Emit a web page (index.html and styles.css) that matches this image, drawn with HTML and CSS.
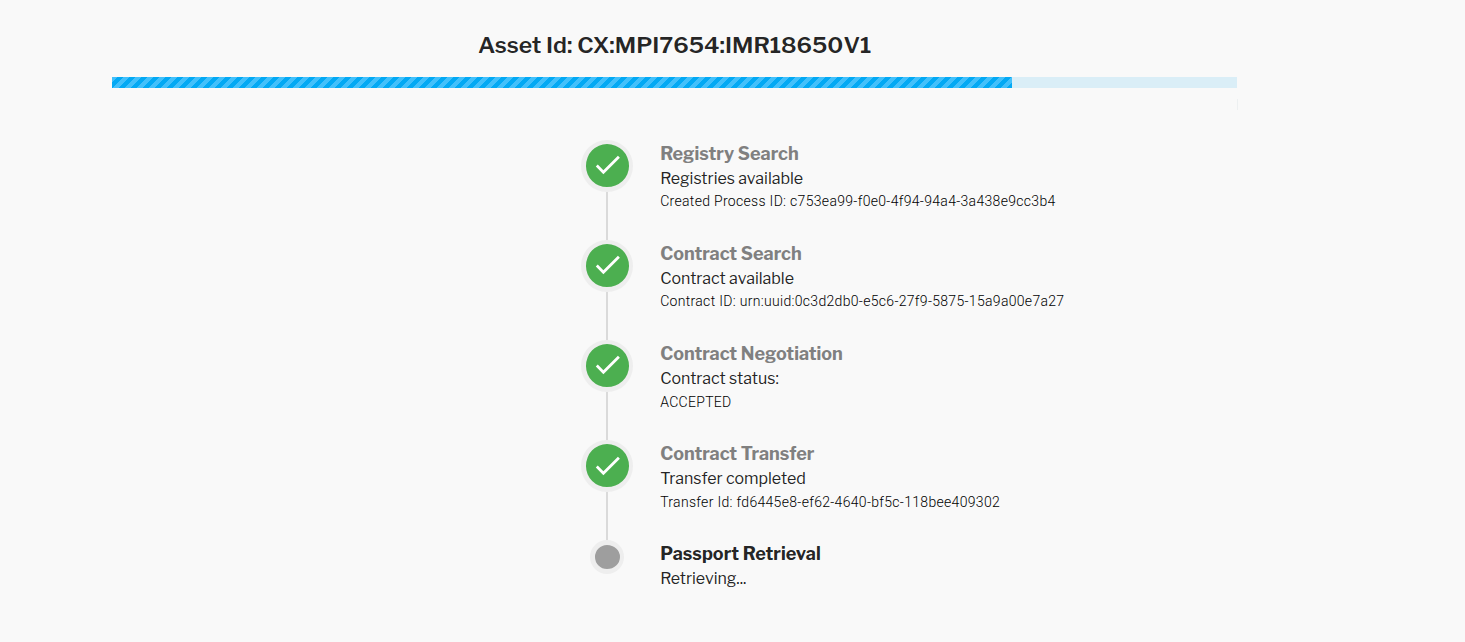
FILE: index.html
```html
<!DOCTYPE html>
<html lang="en">
<head>
<meta charset="utf-8">
<title>Asset loading</title>
<link rel="stylesheet" href="styles.css">
</head>
<body>
<main class="page">
  <h1 class="title">Asset Id: CX:MPI7654:IMR18650V1</h1>
  <div class="progress"><div class="progress-value"></div></div>
  <div class="marker"></div>
  <ol class="timeline">
    <li class="step">
      <div class="rail"><span class="dot"><svg viewBox="0 0 24 24"><path d="M21 7 9 19l-5.500-5.500 1.410-1.410L9 16.170 19.590 5.590z"/></svg></span></div>
      <div class="body"><h2 class="name">Registry Search</h2><p class="status">Registries available</p><p class="detail">Created Process ID: c753ea99-f0e0-4f94-94a4-3a438e9cc3b4</p></div>
    </li>
    <li class="step">
      <div class="rail"><span class="dot"><svg viewBox="0 0 24 24"><path d="M21 7 9 19l-5.500-5.500 1.410-1.410L9 16.170 19.590 5.590z"/></svg></span></div>
      <div class="body"><h2 class="name">Contract Search</h2><p class="status">Contract available</p><p class="detail">Contract ID: urn:uuid:0c3d2db0-e5c6-27f9-5875-15a9a00e7a27</p></div>
    </li>
    <li class="step">
      <div class="rail"><span class="dot"><svg viewBox="0 0 24 24"><path d="M21 7 9 19l-5.500-5.500 1.410-1.410L9 16.170 19.590 5.590z"/></svg></span></div>
      <div class="body"><h2 class="name">Contract Negotiation</h2><p class="status">Contract status:</p><p class="detail">ACCEPTED</p></div>
    </li>
    <li class="step">
      <div class="rail"><span class="dot"><svg viewBox="0 0 24 24"><path d="M21 7 9 19l-5.500-5.500 1.410-1.410L9 16.170 19.590 5.590z"/></svg></span></div>
      <div class="body"><h2 class="name">Contract Transfer</h2><p class="status">Transfer completed</p><p class="detail">Transfer Id: fd6445e8-ef62-4640-bf5c-118bee409302</p></div>
    </li>
    <li class="step">
      <div class="rail"><span class="dot pending"></span></div>
      <div class="body"><h2 class="name current">Passport Retrieval</h2><p class="status">Retrieving...</p></div>
    </li>
  </ol>
</main>
</body>
</html>
```
FILE: styles.css
```css
* { box-sizing: border-box; margin: 0; padding: 0; }
body {
  background: #f9f9f9;
  color: rgba(0, 0, 0, .87);
  font-family: "Libre Franklin", "Open Sans", sans-serif;
  overflow: hidden;
}
.page { width: 1124.600px; margin-left: 112.400px; padding-top: 29px; }
.title {
  height: 48px;
  font-size: 22.900px;
  font-weight: 600;
  line-height: 32px;
  text-align: center;
  white-space: nowrap;
}
.progress { height: 11px; background: #daeef7; }
.progress-value {
  width: 80%;
  height: 100%;
  background: linear-gradient(135deg, #42c0fb 25%, #03a9f4 0, #03a9f4 50%, #42c0fb 0, #42c0fb 75%, #03a9f4 0) 0 0 / 12px 12px;
}
.marker { width: 1px; height: 11px; margin: 11px -1px 0 auto; background: #edf0f1; }
.timeline { list-style: none; margin: 30px 0 0 468.900px; }
.step { display: flex; height: 100.100px; gap: 26.900px; }
.rail { display: flex; flex-direction: column; align-items: center; width: 52px; }
.rail::after { content: ""; flex: 1; width: 2px; background: #dadada; }
.step:last-child .rail::after { display: none; }
.dot {
  display: flex;
  align-items: center;
  justify-content: center;
  width: 52px;
  height: 51.500px;
  border: 4px solid #eee;
  border-left-width: 5px;
  border-bottom-width: 5px;
  border-radius: 50%;
  background: #4caf50;
}
.dot svg { width: 33px; height: 33px; margin-top: -1px; fill: #fff; }
.dot.pending { width: 34px; height: 34px; border-top-width: 5px; background: #9e9e9e; }
.body { padding-top: 2px; white-space: nowrap; }
.name { font-size: 18px; font-weight: 700; line-height: 24px; color: #808080; }
.name.current { color: rgba(0, 0, 0, .87); }
.status { font-size: 16px; line-height: 25px; letter-spacing: -.02px; }
.detail { padding-top: .380px; font: 300 14px/21px Roboto, sans-serif; letter-spacing: .31px; color: #000; }
```
